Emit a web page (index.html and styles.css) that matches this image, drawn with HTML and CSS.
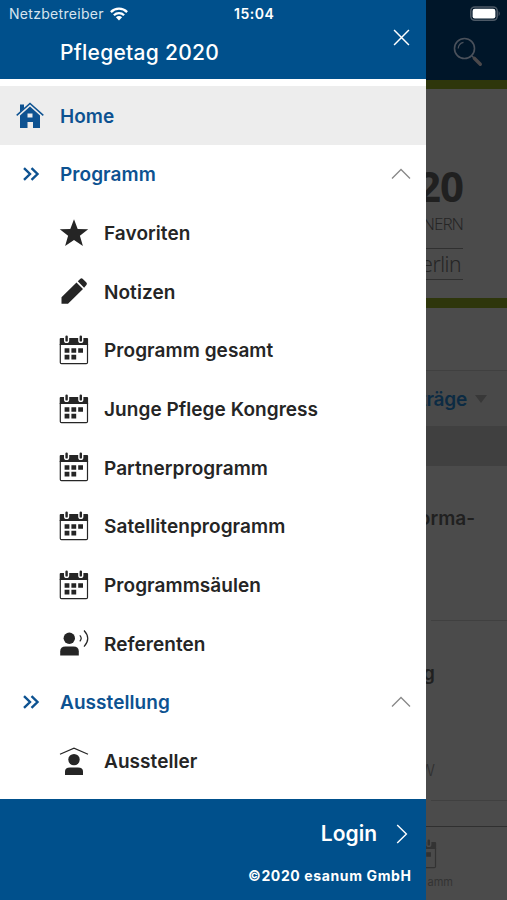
FILE: index.html
```html
<!DOCTYPE html>
<html lang="de">
<head>
<meta charset="utf-8">
<title>Pflegetag 2020</title>
<link rel="stylesheet" href="styles.css">
</head>
<body>
<svg width="0" height="0" class="defs">
  <symbol id="calendar" viewBox="0 0 30 30">
    <path d="M1.3 9V27.5Q1.3 28.7 2.5 28.7H27.3Q28.5 28.7 28.5 27.5V9" fill="none" stroke="currentColor" stroke-width="1.2"/>
    <path d="M.7 4Q.7 3 1.7 3H5V5.5A2.6 2.6 0 0 0 10.2 5.5V3H19.2V5.5A2.6 2.6 0 0 0 24.4 5.5V3H28.1Q29.1 3 29.1 4V10H.7Z" fill="currentColor"/>
    <path d="M7.6 1.6V5.4M21.8 1.6V5.4" stroke="currentColor" stroke-width="2.4" stroke-linecap="round"/>
    <path d="M5.6 13.2h4.8v4.6H5.6zM12.4 13.2h4.8v4.6h-4.8zM19.2 13.2H24v4.6h-4.8zM5.6 19.8h4.8v4.6H5.6zM12.4 19.8h4.8v4.6h-4.8z" fill="currentColor"/>
  </symbol>
  <symbol id="double" viewBox="0 0 18 14">
    <path d="M2 1.2 8 7 2 12.8M9.5 1.2 15.5 7 9.5 12.8" fill="none" stroke="currentColor" stroke-width="2.4"/>
  </symbol>
  <symbol id="up" viewBox="0 0 20 12">
    <path d="M1 10.5 10 1.5 19 10.5" fill="none" stroke="currentColor" stroke-width="1.3"/>
  </symbol>
</svg>
<div class="app">
  <aside class="drawer">
    <header class="drawer-head">
      <div class="status">
        <span class="carrier">Netzbetreiber</span>
        <svg class="wifi" viewBox="0 0 18 14"><g fill="none" stroke="#fff" stroke-width="2.3"><path d="M.9 5.1A11.4 11.4 0 0 1 17.1 5.1"/><path d="M3.9 8.3A7.2 7.2 0 0 1 14.1 8.3"/></g><path d="M5.9 10.2A4.4 4.4 0 0 1 12.1 10.2L9 13.4Z" fill="#fff"/></svg>
        <span class="time">15:04</span>
      </div>
      <div class="title-row">
        <h1>Pflegetag 2020</h1>
        <svg class="close" viewBox="0 0 16 16"><path d="M1 1 15 15M15 1 1 15" stroke="#fff" stroke-width="1.4"/></svg>
      </div>
    </header>
    <nav class="menu">
      <a class="row active"><span class="lead"><svg class="house" viewBox="0 0 28 27"><path d="M4 2.5H8V6.5L4 10Z" fill="currentColor"/><path d="M.7 13.4 14 1.5 27.3 13.4" fill="none" stroke="currentColor" stroke-width="1.5"/><path d="M4 13.4 14 4.5 24 13.4V26H17V20H11.5V26H4ZM11.5 11.5V15.5H16.5V11.5Z" fill="currentColor" fill-rule="evenodd"/></svg></span><span class="text">Home</span></a>
      <a class="row section"><span class="lead"><svg class="double"><use href="#double"/></svg></span><span class="text">Programm</span><svg class="up"><use href="#up"/></svg></a>
      <a class="row sub"><svg class="icon" viewBox="0 0 30 30"><path d="M15 1.2 18.7 11 29.2 11.3 20.9 17.8 23.9 28 15 22 6.1 28 9.1 17.8 .8 11.3 11.3 11Z" fill="currentColor"/></svg><span class="text">Favoriten</span></a>
      <a class="row sub"><svg class="icon" viewBox="0 0 30 30"><path d="M2.5 27.8V21.2L17.5 6.5 24 13 9 27.8ZM18.8 5.2 21.4 2.7Q22.5 1.8 23.6 2.8L27.4 6.6Q28.5 7.9 27.4 9.1L25.1 11.7Z" fill="currentColor"/></svg><span class="text">Notizen</span></a>
      <a class="row sub"><svg class="icon"><use href="#calendar"/></svg><span class="text">Programm gesamt</span></a>
      <a class="row sub"><svg class="icon"><use href="#calendar"/></svg><span class="text">Junge Pflege Kongress</span></a>
      <a class="row sub"><svg class="icon"><use href="#calendar"/></svg><span class="text">Partnerprogramm</span></a>
      <a class="row sub"><svg class="icon"><use href="#calendar"/></svg><span class="text">Satellitenprogramm</span></a>
      <a class="row sub"><svg class="icon"><use href="#calendar"/></svg><span class="text">Programmsäulen</span></a>
      <a class="row sub"><svg class="icon" viewBox="0 0 30 30"><circle cx="10.3" cy="10.3" r="5.7" fill="currentColor"/><path d="M1.2 27.5V23.5Q1.2 18.5 6.5 18.5H14.5Q19.8 18.5 19.8 23.5V27.5Z" fill="currentColor"/><path d="M20.8 7.3Q23.6 10.3 20.8 13.3M25 2.5Q32.5 10.3 25 18.6" fill="none" stroke="currentColor" stroke-width="1.2"/></svg><span class="text">Referenten</span></a>
      <a class="row section"><span class="lead"><svg class="double"><use href="#double"/></svg></span><span class="text">Ausstellung</span><svg class="up"><use href="#up"/></svg></a>
      <a class="row sub"><svg class="icon" viewBox="0 0 30 30"><path d="M1 8.2 15 2.2 29 8.2" fill="none" stroke="currentColor" stroke-width="1.2"/><circle cx="15" cy="13.6" r="5.7" fill="currentColor"/><path d="M6 29V25.6Q6 21.5 11 21.5H19Q24 21.5 24 25.6V29Z" fill="currentColor"/></svg><span class="text">Aussteller</span></a>
    </nav>
    <footer class="drawer-foot">
      <a class="login"><span class="login-text">Login</span><svg class="next" viewBox="0 0 12 20"><path d="M1.2 1 10.4 10 1.2 19" fill="none" stroke="#fff" stroke-width="1.4"/></svg></a>
      <p><span class="copy">©2020 esanum GmbH</span></p>
    </footer>
  </aside>
  <main class="page">
    <header class="page-head">
      <svg class="battery" viewBox="0 0 31 16"><rect x=".8" y=".9" width="26.4" height="13.4" rx="4" fill="none" stroke="#4d5a67" stroke-width="1.5"/><rect x="2.6" y="2.7" width="22.8" height="9.8" rx="2.2" fill="#fff"/><path d="M28.6 5Q31 7.6 28.6 10.2Z" fill="#4d5a67"/></svg>
      <svg class="search" viewBox="0 0 30 30"><circle cx="11.5" cy="11.5" r="10" fill="none" stroke="#4a515b" stroke-width="1.6"/><path d="M5.2 11.5Q5.5 6.5 10.5 5.4" fill="none" stroke="#4a515b" stroke-width="1.2"/><path d="M19 19 21 21" stroke="#4a515b" stroke-width="1.5"/><path d="M21.3 21.3 27.3 27.3" stroke="#4b494b" stroke-width="3.4" stroke-linecap="round"/></svg>
    </header>
    <section class="banner">
      <strong>20</strong>
      <span class="partners">NERN</span>
      <span class="city">erlin</span>
    </section>
    <div class="blank"></div>
    <div class="filter"><span>träge</span><i></i></div>
    <div class="band"></div>
    <div class="item first"><b>orma-</b></div>
    <div class="item second"><b>g</b><span>W</span></div>
    <div class="rest"></div>
    <div class="tab"><svg><use href="#calendar"/></svg><span>amm</span></div>
  </main>
</div>
</body>
</html>
```
FILE: styles.css
```css
* { box-sizing: border-box; }
body { margin: 0; font-family: Inter, "Liberation Sans", sans-serif; }
.defs { display: block; }
.app { display: flex; width: 507px; height: 900px; overflow: hidden; }
svg { flex: none; display: block; }

.drawer { width: 426px; flex: none; display: flex; flex-direction: column; background: #fff; }
.drawer-head { height: 79px; flex: none; background: #00508c; color: #fff; }
.status { display: flex; align-items: center; height: 27px; padding-left: 9px; }
.carrier { width: 96px; font-size: 14px; letter-spacing: .3px; color: #d7e4ef; white-space: nowrap; }
.wifi { width: 18px; height: 14px; margin-left: 5px; }
.time { margin-left: 106px; font-size: 14px; font-weight: 600; letter-spacing: .5px; }
.title-row { display: flex; justify-content: space-between; height: 52px; padding: 2px 16px 0 60px; }
h1 { margin: 10px 0 0; font-size: 21px; line-height: 28px; font-weight: 540; letter-spacing: .28px; }
.close { width: 17px; height: 17px; }

.menu { flex: 1; padding-top: 7px; color: #252525; }
.row { display: flex; align-items: center; height: 58.66px; font-size: 19px; font-weight: 600; letter-spacing: .06px; }
.text { padding-top: 2px; }
.active { background: #ededed; }
.active, .section { color: #0d5291; }
.lead { width: 60px; display: flex; justify-content: center; }
.house { width: 28px; height: 27px; }
.double { width: 18px; height: 14px; margin-left: 2px; }
.up { width: 20px; height: 12px; margin-left: auto; margin-right: 15px; color: #888; }
.sub { padding-left: 59px; }
.icon { width: 30px; height: 30px; margin-right: 15px; }

.drawer-foot { height: 101.5px; flex: none; background: #00508c; color: #fff; padding: 21px 15px 0 0; }
.login { display: flex; justify-content: flex-end; align-items: center; height: 28px; font-size: 21px; font-weight: 560; }
.next { width: 12px; height: 20px; margin: 0 3px 0 19px; }
.drawer-foot p { margin: 18px 0 0; text-align: right; font-size: 14px; line-height: 20px; font-weight: 700; letter-spacing: .62px; }
.copy { margin-right: -.6px; }

.page { width: 81px; display: flex; flex-direction: column; overflow: hidden; background: #4b4b4b; color: #202020; }
.page > * { flex: none; }
.page-head { height: 80px; background: #001629; display: flex; flex-direction: column; padding: 6px 0 0 27px; }
.battery { width: 31px; height: 16px; margin-left: 17px; }
.search { width: 30px; height: 30px; margin-top: 15px; }
.banner { height: 228px; border-top: 9px solid #2e360b; border-bottom: 10px solid #2e360b; display: flex; flex-direction: column; align-items: flex-end; padding: 72px 44px 0 0; }
.banner strong { font: 700 42px/50px "Noto Sans", sans-serif; letter-spacing: -1px; }
.partners { font: 300 17px/25px "Noto Sans", sans-serif; letter-spacing: -1px; color: #252525; }
.city { align-self: stretch; display: flex; justify-content: flex-end; margin-top: 12px; border: solid #303030; border-width: 1px 0; font: 300 21px/30px "Noto Sans", sans-serif; padding-right: 2px; letter-spacing: -.5px; color: #252525; }
.blank { height: 63px; border-bottom: 1px solid #404040; }
.filter { height: 55px; background: #494949; display: flex; align-items: center; justify-content: flex-end; gap: 8px; padding: 1px 20px 0 0; font-size: 19px; font-weight: 600; letter-spacing: -.2px; color: #0c2b43; }
.filter i { border: solid transparent; border-width: 8px 6px 0; border-top-color: #383838; }
.band { height: 40px; background: #404040; }
.item { display: flex; flex-direction: column; align-items: flex-end; font-size: 19px; line-height: 24px; border-bottom: 1px solid #404040; margin-left: 5px; }
.item b { font-weight: 600; }
.first { height: 155px; padding: 41px 32px 0 0; }
.second { height: 180px; padding: 41px 72px 0 0; }
.item span { margin-top: 72px; font-size: 16px; font-weight: 300; color: #303030; }
.rest { height: 25px; }
.tab { height: 74px; border-top: 1px solid #303030; display: flex; flex-direction: column; align-items: flex-end; padding: 12px 54px 0 0; color: #333; font-size: 11px; }
.tab svg { width: 30px; height: 30px; margin-right: 16px; }
.tab span { margin-top: 6px; }
```
